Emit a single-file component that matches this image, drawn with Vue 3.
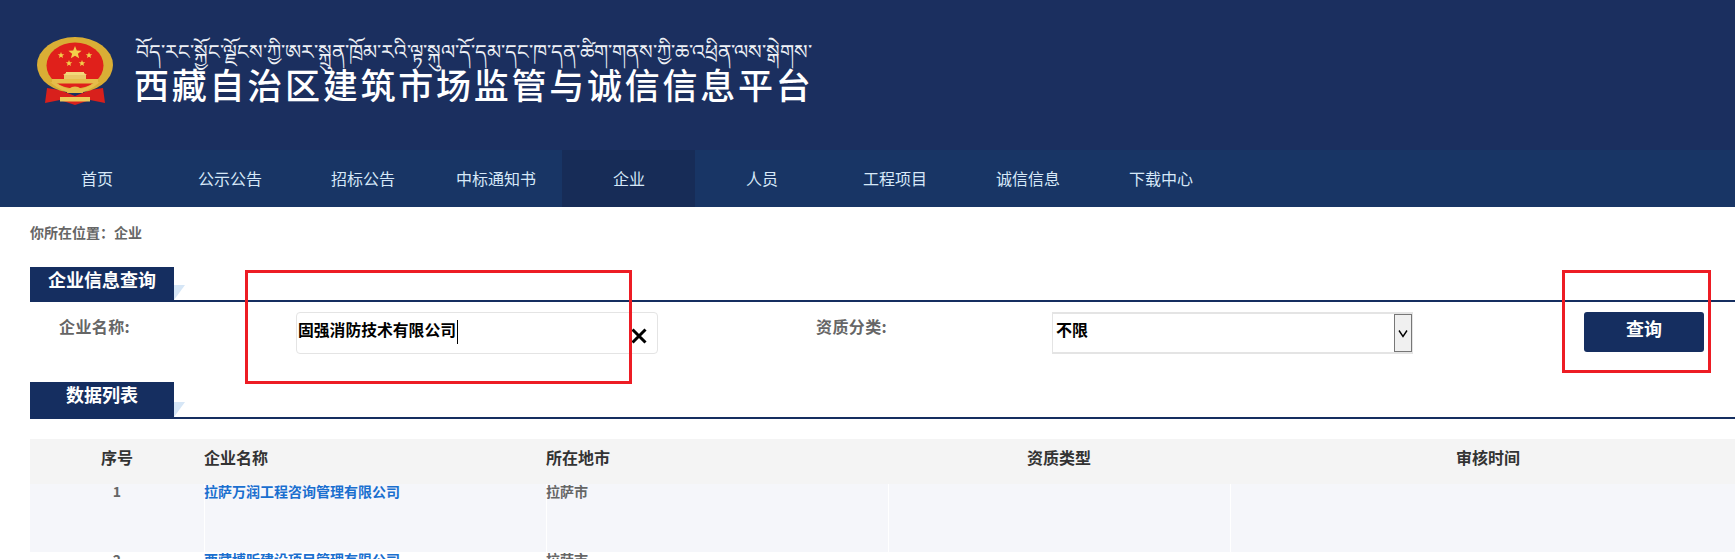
<script setup>
const navItems = ["首页", "公示公告", "招标公告", "中标通知书", "企业", "人员", "工程项目", "诚信信息", "下载中心"];
const activeNav = "企业";

const columns = ["序号", "企业名称", "所在地市", "资质类型", "审核时间"];
const rows = [
  { no: 1, name: "拉萨万润工程咨询管理有限公司", city: "拉萨市", type: "", time: "" },
  { no: 2, name: "西藏博昕建设项目管理有限公司", city: "拉萨市", type: "", time: "" },
];
</script>

<template>
  <div class="page">
    <header class="banner">
      <svg class="emblem" viewBox="17 16 76 70" width="76" height="70">
        <path d="M27 68 L40 70 L55 76 L70 70 L83 68 L85 83 L70 80 L55 85 L40 80 L25 83 Z" fill="#d8201c" />
        <ellipse cx="55" cy="45" rx="38" ry="28" fill="#d9ae35" />
        <ellipse cx="55" cy="45.500" rx="28.500" ry="23" fill="#e0201b" />
        <path d="M55 26l1.800 4.400 4.800.3-3.700 3 1.200 4.600-4.100-2.500-4.100 2.500 1.200-4.600-3.700-3 4.800-.3z" fill="#f2cf4a" />
        <path d="M41 32l.9 2.200 2.400.1-1.900 1.500.6 2.300-2-1.300-2 1.300.6-2.300-1.900-1.500 2.400-.1z" fill="#f2cf4a" />
        <path d="M69 32l.9 2.200 2.400.1-1.900 1.500.6 2.300-2-1.300-2 1.300.6-2.300-1.900-1.500 2.400-.1z" fill="#f2cf4a" />
        <path d="M49 40l.9 2.200 2.400.1-1.900 1.500.6 2.300-2-1.300-2 1.300.6-2.300-1.900-1.500 2.400-.1z" fill="#f2cf4a" />
        <path d="M62 40l.9 2.200 2.400.1-1.900 1.500.6 2.300-2-1.300-2 1.300.6-2.300-1.900-1.500 2.400-.1z" fill="#f2cf4a" />
        <path d="M43 55l3-2v-1h18v1l3 2z" fill="#f3d87a" />
        <rect x="44" y="55" width="22" height="4" fill="#e9c766" />
        <rect x="32" y="59" width="46" height="4.500" fill="#e6bd4a" />
        <path d="M30 62 Q55 84 80 62 L74 63 Q55 76 36 63 Z" fill="#e6bd4a" />
        <path d="M47 73a8 6.500 0 0 1 16 0z" fill="#e6bd4a" />
        <rect x="40" y="77" width="30" height="4.500" fill="#edc95a" />
      </svg>
      <div class="banner-text">
        <div class="tibetan">བོད་རང་སྐྱོང་ལྗོངས་ཀྱི་ཨར་སྐྲུན་ཁྲོམ་རའི་ལྟ་སྐུལ་དོ་དམ་དང་ཁ་དན་ཚིག་གནས་ཀྱི་ཆ་འཕྲིན་ལས་སྒེགས་</div>
        <h1 class="site-title">西藏自治区建筑市场监管与诚信信息平台</h1>
      </div>
    </header>

    <nav class="nav">
      <a v-for="item in navItems" :key="item" class="nav-item" :class="{ active: item === activeNav }">{{ item }}</a>
    </nav>

    <main class="content">
      <div class="crumb">你所在位置：企业</div>

      <div class="section-head">
        <div class="section-title">企业信息查询</div>
      </div>

      <div class="search-row">
        <label class="field-label">企业名称:</label>
        <div class="field-box">
          <span>固强消防技术有限公司</span><i class="caret"></i>
          <svg class="clear" viewBox="0 0 16 16" width="16" height="16">
            <path d="M1.500 1.500L14.500 14.500M14.500 1.500L1.500 14.500" stroke="#000" stroke-width="3" fill="none" />
          </svg>
        </div>
        <label class="field-label second">资质分类:</label>
        <div class="field-box select-box">
          <span>不限</span>
          <div class="select-btn">
            <svg viewBox="0 0 10 10" width="10" height="10">
              <path d="M1 2.500L5 8.500L9 2.500" stroke="#000" stroke-width="1.400" fill="none" />
            </svg>
          </div>
        </div>
        <button class="search-btn" type="button">查询</button>
      </div>

      <div class="section-head list-head">
        <div class="section-title">数据列表</div>
      </div>

      <div class="table">
        <div class="tr th">
          <div v-for="col in columns" :key="col" class="cell">{{ col }}</div>
        </div>
        <div v-for="row in rows" :key="row.no" class="tr td">
          <div class="cell">{{ row.no }}</div>
          <div class="cell"><a class="company">{{ row.name }}</a></div>
          <div class="cell">{{ row.city }}</div>
          <div class="cell">{{ row.type }}</div>
          <div class="cell">{{ row.time }}</div>
        </div>
      </div>
    </main>

    <div class="mark mark-input"></div>
    <div class="mark mark-button"></div>
  </div>
</template>

<style>
html,
body {
  margin: 0;
  overflow: hidden;
  background: #fff;
}
</style>

<style scoped>
.page {
  position: relative;
  width: 1735px;
  height: 559px;
  overflow: hidden;
  font-family: "Noto Sans CJK SC", "Noto Sans", sans-serif;
}

.banner {
  height: 150px;
  box-sizing: border-box;
  padding: 36px 0 0 37px;
  background: #1b2f5f;
  display: flex;
  gap: 21px;
}

.emblem {
  flex: none;
}

.tibetan {
  height: 30px;
  padding: 3px 0 0 2px;
  box-sizing: border-box;
  font-size: 20.200px;
  line-height: 24px;
  color: #eef1f6;
  white-space: nowrap;
}

.site-title {
  margin: 0;
  font-size: 35px;
  letter-spacing: 2.750px;
  line-height: 36px;
  font-weight: 500;
  color: #fff;
  white-space: nowrap;
}

.nav {
  height: 57px;
  padding-left: 30px;
  background: #183565;
  display: flex;
}

.nav-item {
  width: 133px;
  box-sizing: border-box;
  padding-left: 1px;
  text-align: center;
  font-size: 16px;
  line-height: 57px;
  color: #d6e8f8;
}

.nav-item.active {
  background: #172c57;
}

.content {
  padding-left: 30px;
}

.crumb {
  height: 60px;
  font-size: 14px;
  line-height: 50px;
  font-weight: 700;
  color: #666;
}

.section-head {
  width: 1705px;
  height: 35px;
  box-sizing: border-box;
  border-bottom: 2px solid #152e60;
  position: relative;
}

.section-title {
  width: 144px;
  height: 35px;
  background: #152e60;
  color: #fff;
  font-size: 18px;
  font-weight: 700;
  line-height: 25px;
  text-align: center;
}

/* little light blue corner next to the title */
.section-head::after {
  content: "";
  position: absolute;
  left: 144px;
  top: 18px;
  border-top: 15px solid #d6e6f6;
  border-right: 11px solid transparent;
  width: 0;
  height: 0;
}

.list-head {
  height: 37px;
}

.list-head .section-title {
  height: 37px;
}

.list-head::after {
  top: 20px;
}

.search-row {
  height: 80px;
  box-sizing: border-box;
  padding: 10px 0 0 29px;
  display: grid;
  grid-template-columns: 237px 362px 394px 361px 291px;
  grid-template-rows: 42px;
}

.field-label {
  font-size: 16px;
  letter-spacing: 0.400px;
  font-weight: 700;
  line-height: 28px;
  color: #666;
}

.field-label.second {
  margin-left: 158px;
}

.field-box {
  position: relative;
  box-sizing: border-box;
  border: 1px solid #e4e4e4;
  border-radius: 4px;
  padding-left: 1px;
  font-size: 15.800px;
  font-weight: 700;
  line-height: 34px;
  color: #000;
  display: flex;
  align-items: flex-start;
}

.caret {
  width: 1px;
  height: 24px;
  margin: 7px 0 0 1px;
  background: #000;
}

.clear {
  position: absolute;
  right: 10px;
  top: 15px;
}

.select-box {
  border-radius: 0;
  border-width: 2px 1px;
  padding-left: 3px;
  font-size: 16px;
  line-height: 30px;
  justify-content: space-between;
}

.select-btn {
  width: 18px;
  height: 38px;
  box-sizing: border-box;
  border: 1px solid #777;
  background: #f0f0f0;
  display: flex;
  align-items: center;
  justify-content: center;
}

.search-btn {
  margin-left: 171px;
  width: 120px;
  height: 40px;
  padding: 0 0 9px;
  border: none;
  border-radius: 3px;
  background: #152e60;
  color: #fff;
  font: 700 18px "Noto Sans CJK SC", sans-serif;
}

.table {
  width: 1716px;
  margin-top: 20px;
  font-size: 14px;
}

.tr {
  display: grid;
  grid-template-columns: 174px 342px 342px 342px 516px;
}

.th {
  height: 45px;
  background: #f4f4f4;
  font-size: 16px;
  font-weight: 700;
  line-height: 36px;
  color: #333;
}

.th .cell {
  text-align: center;
}

.th .cell:nth-child(2),
.th .cell:nth-child(3) {
  text-align: left;
}

.td {
  height: 68px;
  font-weight: 700;
  line-height: 14px;
  color: #666;
}

.td:nth-child(2) {
  background: #f5f6fa;
}

.td .cell {
  box-shadow: inset 1px 0 #fff;
}

.td .cell:first-child {
  text-align: center;
  box-shadow: none;
}

.company {
  color: #1a6fcf;
}

.mark {
  position: absolute;
  box-sizing: border-box;
  border: 3px solid #ed1c24;
}

.mark-input {
  left: 245px;
  top: 270px;
  width: 387px;
  height: 114px;
}

.mark-button {
  left: 1562px;
  top: 270px;
  width: 149px;
  height: 103px;
}
</style>
